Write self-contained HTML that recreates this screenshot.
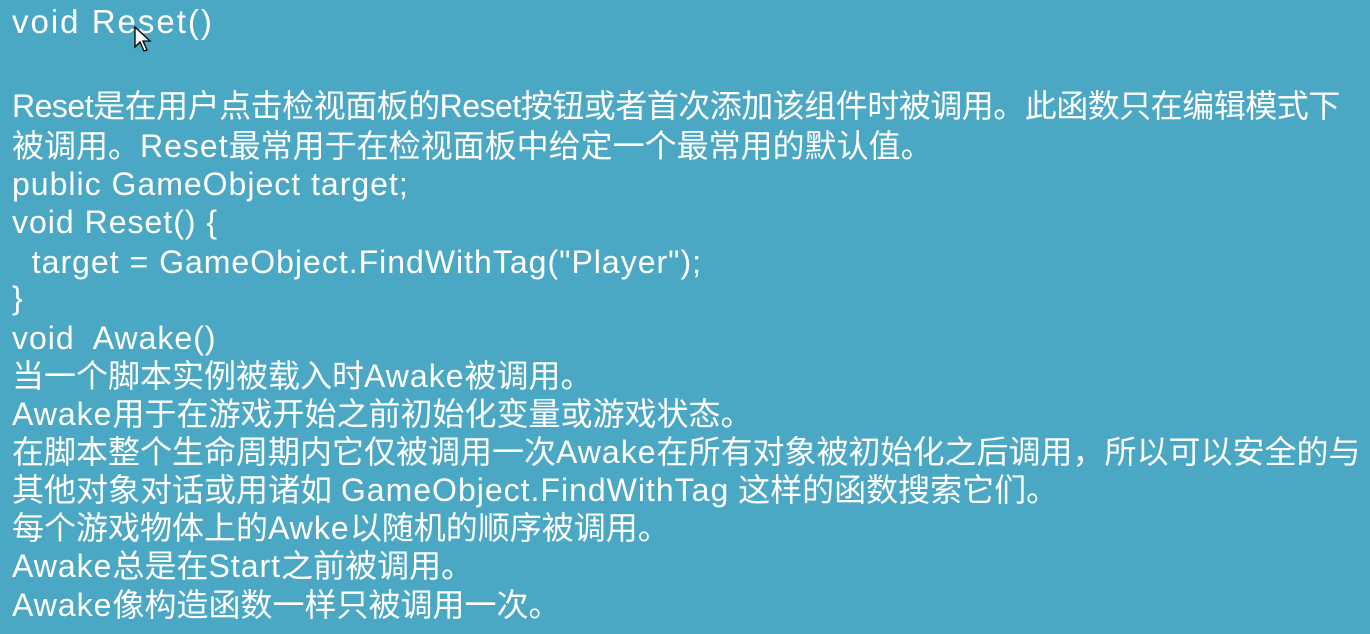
<!DOCTYPE html>
<html><head><meta charset="utf-8"><style>
html,body{margin:0;padding:0;}
body{width:1370px;height:634px;background:#4ba8c5;position:relative;overflow:hidden;
font-family:"Liberation Sans","Noto Sans CJK SC",sans-serif;color:#fff;font-size:32px;}
.l{position:absolute;left:12px;white-space:pre;line-height:38px;}
.e{letter-spacing:1px;}
</style></head><body>
<div class="l" style="top:3px;font-size:33px;letter-spacing:2px">void Reset()</div>
<div class="l" style="top:87px;letter-spacing:-0.5px">Reset是在用户点击检视面板的Reset按钮或者首次添加该组件时被调用。此函数只在编辑模式下</div>
<div class="l" style="top:127px">被调用。<span class="e">Reset</span>最常用于在检视面板中给定一个最常用的默认值。</div>
<div class="l e" style="top:165px">public GameObject target;</div>
<div class="l e" style="top:203px">void Reset() {</div>
<div class="l e" style="top:243px">  target = GameObject.FindWithTag("Player");</div>
<div class="l e" style="top:279px">}</div>
<div class="l e" style="top:319px">void  Awake()</div>
<div class="l" style="top:357px">当一个脚本实例被载入时<span class="e">Awake</span>被调用。</div>
<div class="l" style="top:395px"><span class="e">Awake</span>用于在游戏开始之前初始化变量或游戏状态。</div>
<div class="l" style="top:433px">在脚本整个生命周期内它仅被调用一次<span class="e">Awake</span>在所有对象被初始化之后调用，所以可以安全的与</div>
<div class="l" style="top:471px">其他对象对话或用诸如 <span class="e">GameObject.FindWithTag</span> 这样的函数搜索它们。</div>
<div class="l" style="top:509px">每个游戏物体上的<span class="e">Awke</span>以随机的顺序被调用。</div>
<div class="l" style="top:547px"><span class="e">Awake</span>总是在<span class="e">Start</span>之前被调用。</div>
<div class="l" style="top:586px"><span class="e">Awake</span>像构造函数一样只被调用一次。</div>
<svg style="position:absolute;left:134px;top:26px" width="20" height="28" viewBox="0 0 20 28">
<path d="M1 1 L1 21 L6 16 L10 25 L13 24 L9 15 L16 15 Z" fill="#fff" stroke="#000" stroke-width="1.3"/>
</svg>
</body></html>
